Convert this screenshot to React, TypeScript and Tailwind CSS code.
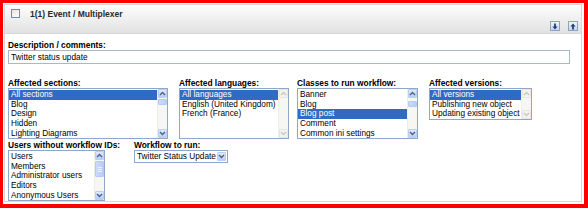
import React from 'react';

type ScrollMode = 'enabled' | 'disabled';

const Chevron: React.FC<{ up?: boolean; color: string }> = ({ up, color }) => (
  <svg width="7" height="5" viewBox="0 0 7 5" className="block">
    <path
      d={up ? 'M1 4 L3.5 1.5 L6 4' : 'M1 1 L3.5 3.5 L6 1'}
      fill="none"
      stroke={color}
      strokeWidth="1.4"
    />
  </svg>
);

const ScrollButton: React.FC<{ up?: boolean; mode: ScrollMode }> = ({ up, mode }) => (
  <div
    className={
      mode === 'enabled'
        ? 'h-[9px] flex items-center justify-center rounded-[1px] border border-[#bccdf3] bg-gradient-to-b from-[#e1eafe] to-[#b9cdf6]'
        : 'h-[9px] flex items-center justify-center rounded-[1px] border border-[#e6e6e0] bg-[#f3f3ef]'
    }
  >
    <Chevron up={up} color={mode === 'enabled' ? '#4d6185' : '#c9c9c2'} />
  </div>
);

const ScrollBar: React.FC<{ mode: ScrollMode; thumbTop?: number; thumbH?: number }> = ({
  mode,
  thumbTop = 0,
  thumbH = 0,
}) => (
  <div className="w-[10px] flex flex-col bg-[#f6f6f2] border-l border-[#eeeee8]">
    <ScrollButton up mode={mode} />
    <div className="flex-1 flex flex-col">
      {mode === 'enabled' && (
        <>
          <div style={{ height: thumbTop }} />
          <div
            className="rounded-[1px] border border-[#b7c9f3] bg-gradient-to-r from-[#cbdafd] to-[#b9ccf8] flex flex-col items-center justify-center gap-[1px]"
            style={{ height: thumbH }}
          >
            {thumbH > 8 && (
              <>
                <div className="w-[4px] h-px bg-[#eef3ff]" />
                <div className="w-[4px] h-px bg-[#eef3ff]" />
                <div className="w-[4px] h-px bg-[#eef3ff]" />
              </>
            )}
          </div>
        </>
      )}
    </div>
    <ScrollButton mode={mode} />
  </div>
);

const ListBox: React.FC<{
  items: string[];
  selected?: number;
  w: string;
  h: string;
  mode: ScrollMode;
  thumbTop?: number;
  thumbH?: number;
}> = ({ items, selected, w, h, mode, thumbTop, thumbH }) => (
  <div className={`${w} ${h} flex border border-[#8fa8c8] bg-white`}>
    <div className="flex-1 overflow-hidden pt-px">
      {items.map((it, i) => (
        <div
          key={it}
          className={
            i === selected
              ? 'h-[9.7px] leading-[9.7px] pl-[2px] bg-[#316ac5] text-white whitespace-nowrap'
              : 'h-[9.7px] leading-[9.7px] pl-[2px] text-black whitespace-nowrap'
          }
        >
          {it}
        </div>
      ))}
    </div>
    <ScrollBar mode={mode} thumbTop={thumbTop} thumbH={thumbH} />
  </div>
);

const Label: React.FC<{ children: React.ReactNode }> = ({ children }) => (
  <div className="h-[10px] leading-[10px] font-bold text-[8.4px] whitespace-nowrap text-black">{children}</div>
);

const MoveButton: React.FC<{ up?: boolean }> = ({ up }) => (
  <div className="w-[10px] h-[10px] flex items-center justify-center border border-[#8ea3c2] bg-gradient-to-b from-[#f1f5fb] to-[#c8d5e8]">
    <svg width="6" height="7" viewBox="0 0 6 7" className="block">
      {up ? (
        <path d="M3 0.5 L5.6 3.4 H3.9 V6.5 H2.1 V3.4 H0.4 Z" fill="#1f3f7f" />
      ) : (
        <path d="M3 6.5 L5.6 3.6 H3.9 V0.5 H2.1 V3.6 H0.4 Z" fill="#1f3f7f" />
      )}
    </svg>
  </div>
);

export default function App() {
  return (
    <div className="w-[588px] h-[208px] border-t-[3px] border-l-[3px] border-r-[4px] border-b-[4px] border-[#ff0000] bg-white pt-px pl-px pr-[2px] pb-[2px] font-['Liberation_Sans',Arial,sans-serif] text-[8.25px] text-black">
      <div className="h-full border border-[#d6d6d6] flex flex-col">
        <div className="h-[29px] border-b border-[#d8d8d8] bg-gradient-to-b from-[#fdfdfd] to-[#e2e2e2] flex">
          <div className="flex items-start pt-[4px] pl-[6px]">
            <div className="w-[9px] h-[9px] border border-[#6e8bb0] bg-gradient-to-br from-[#e4e4e0] to-white" />
            <div className="ml-[10px] leading-[11px] font-bold text-[8.5px] text-[#2a2a2a]">1(1) Event / Multiplexer</div>
          </div>
          <div className="flex-1" />
          <div className="flex items-end pb-[2px] pr-[3px] gap-[8px]">
            <MoveButton />
            <MoveButton up />
          </div>
        </div>

        <div className="pl-[3px] pr-[11px] pt-[6px]">
          <Label>Description / comments:</Label>
          <div className="h-[14px] border border-[#a9b7c9] leading-[12px] pl-[2px] text-[8.3px]">Twitter status update</div>

          <div className="flex mt-[14px]">
            <div className="w-[171px]">
              <Label>Affected sections:</Label>
              <ListBox
                w="w-[160px]"
                h="h-[51px]"
                items={['All sections', 'Blog', 'Design', 'Hidden', 'Lighting Diagrams']}
                selected={0}
                mode="enabled"
                thumbTop={1}
                thumbH={6}
              />
            </div>
            <div className="w-[118px]">
              <Label>Affected languages:</Label>
              <ListBox
                w="w-[110px]"
                h="h-[51px]"
                items={['All languages', 'English (United Kingdom)', 'French (France)']}
                selected={0}
                mode="disabled"
              />
            </div>
            <div className="w-[132px]">
              <Label>Classes to run workflow:</Label>
              <ListBox
                w="w-[121px]"
                h="h-[51px]"
                items={['Banner', 'Blog', 'Blog post', 'Comment', 'Common ini settings']}
                selected={2}
                mode="enabled"
                thumbTop={3}
                thumbH={6}
              />
            </div>
            <div>
              <Label>Affected versions:</Label>
              <ListBox
                w="w-[103px]"
                h="h-[32px]"
                items={['All versions', 'Publishing new object', 'Updating existing object']}
                selected={0}
                mode="disabled"
              />
            </div>
          </div>

          <div className="flex mt-px">
            <div className="w-[126px]">
              <Label>Users without workflow IDs:</Label>
              <ListBox
                w="w-[97px]"
                h="h-[51px]"
                items={['Users', 'Members', 'Administrator users', 'Editors', 'Anonymous Users']}
                mode="enabled"
                thumbTop={1}
                thumbH={16}
              />
            </div>
            <div>
              <Label>Workflow to run:</Label>
              <div className="w-[94px] h-[13px] border border-[#8fa8c8] flex bg-white">
                <div className="flex-1 leading-[11px] pl-[2px] whitespace-nowrap">Twitter Status Update</div>
                <div className="w-[10px] m-px flex items-center justify-center rounded-[1px] border border-[#bccdf3] bg-gradient-to-b from-[#e1eafe] to-[#b9cdf6]">
                  <Chevron color="#4d6185" />
                </div>
              </div>
            </div>
          </div>
        </div>
      </div>
    </div>
  );
}
